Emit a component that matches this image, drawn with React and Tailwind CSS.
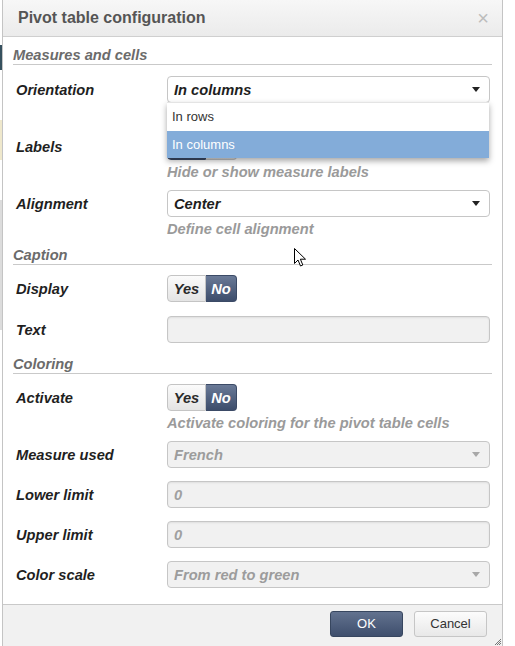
import React from "react";

const font = { fontFamily: '"Liberation Sans", Arial, sans-serif' };

function SectionTitle({ children, className = "" }) {
  return (
    <div className={`border-b border-[#c9c9c9] ${className}`}>
      <div className="h-[17px] leading-[17px] text-[14.67px] font-bold italic text-[#6b6b6b]">
        {children}
      </div>
    </div>
  );
}

function Arrow({ disabled }) {
  return (
    <svg width="8" height="5" viewBox="0 0 8 5" className="shrink-0">
      <path d="M0 0 L8 0 L4 5 Z" fill={disabled ? "#a8a8a8" : "#222"} />
    </svg>
  );
}

function Select({ value, disabled }) {
  return (
    <div
      className={`h-[27px] flex items-center justify-between rounded-[4px] border border-[#c6c6c6] pl-[6px] pr-[9px] ${
        disabled ? "bg-[#f1f1f1]" : "bg-white"
      }`}
    >
      <span
        className={`text-[14.67px] font-bold italic ${disabled ? "text-[#9c9c9c]" : "text-[#1e1e1e]"}`}
      >
        {value}
      </span>
      <Arrow disabled={disabled} />
    </div>
  );
}

function Input({ value }) {
  return (
    <div className="h-[27px] flex items-center rounded-[4px] border border-[#c6c6c6] bg-[#f1f1f1] pl-[6px] shadow-[inset_0_1px_2px_rgba(0,0,0,0.08)]">
      <span className="text-[14.67px] font-bold italic text-[#a0a0a0]">{value}</span>
    </div>
  );
}

function Toggle({ yes }) {
  const on = "bg-gradient-to-b from-[#6a7a97] to-[#3d4d6b] text-white border-[#3b4a66]";
  const off = "bg-gradient-to-b from-[#fbfbfb] to-[#e4e4e4] text-[#2a2a2a] border-[#c4c4c4]";
  return (
    <div className="flex h-[27px] w-[70px] text-[14.67px] font-bold italic">
      <div
        className={`w-[39px] flex items-center justify-center rounded-l-[4px] border ${yes ? on : off}`}
      >
        Yes
      </div>
      <div
        className={`w-[31px] flex items-center justify-center rounded-r-[4px] border border-l-0 ${yes ? off : on}`}
      >
        No
      </div>
    </div>
  );
}

function Row({ label, children, help, className = "" }) {
  return (
    <div className={`flex items-start ${className}`}>
      <div className="w-[154px] pl-[3px] h-[27px] flex items-center text-[14.67px] font-bold italic text-[#1f1f1f]">
        {label}
      </div>
      <div className="flex-1 pr-[2px] relative">
        {children}
        {help !== undefined && (
          <div className="mt-[4px] h-[17px] leading-[17px] text-[14.67px] font-bold italic text-[#9a9a9a]">
            {help}
          </div>
        )}
      </div>
    </div>
  );
}

export default function App() {
  return (
    <div className="relative w-[515px] h-[646px] bg-white flex overflow-hidden" style={font}>
      {/* what peeks out behind the dialog */}
      <div className="w-[2px] flex flex-col">
        <div className="h-[45px]" />
        <div className="h-[25px] bg-[#35505e]" />
        <div className="h-[50px]" />
        <div className="h-[40px] bg-[#efe8cc]" />
        <div className="h-[40px]" />
        <div className="h-[130px] bg-[#dcdcdc]" />
      </div>

      <div className="w-[501px] h-[646px] flex flex-col border-x border-[#c4c4c4] bg-white">
        {/* header */}
        <div className="h-[37px] shrink-0 flex items-center justify-between pl-[15px] pr-[13px] border-b border-[#cfcfcf] bg-gradient-to-b from-[#f7f7f7] to-[#ebebeb]">
          <span className="text-[16px] font-bold text-[#555]">Pivot table configuration</span>
          <span className="text-[20px] leading-none text-[#bcbcbc]">×</span>
        </div>

        {/* body */}
        <div className="flex-1 px-[10px] pt-[10px]">
          <SectionTitle className="mb-[11px]">Measures and cells</SectionTitle>

          <Row label="Orientation" help="" className="mb-[9px] relative z-10">
            <Select value="In columns" />
            <div className="absolute left-0 right-[3px] top-[26px] bg-white border-t border-[#e4e4e4] shadow-[0_3px_6px_rgba(0,0,0,0.35)]">
              <div className="h-[28px] flex items-center pl-[5px] text-[13px] text-[#333]">In rows</div>
              <div className="h-[27px] flex items-center pl-[5px] text-[13px] text-white bg-[#83acd9]">
                In columns
              </div>
            </div>
          </Row>

          <Row label="Labels" help="Hide or show measure labels" className="mb-[9px]">
            <Toggle yes />
          </Row>

          <Row label="Alignment" help="Define cell alignment" className="mb-[9px]">
            <Select value="Center" />
          </Row>

          <SectionTitle className="mb-[10px]">Caption</SectionTitle>

          <Row label="Display" className="mb-[14px]">
            <Toggle yes={false} />
          </Row>

          <Row label="Text" className="mb-[13px]">
            <Input value="" />
          </Row>

          <SectionTitle className="mb-[10px]">Coloring</SectionTitle>

          <Row
            label="Activate"
            help="Activate coloring for the pivot table cells"
            className="mb-[9px]"
          >
            <Toggle yes={false} />
          </Row>

          <Row label="Measure used" className="mb-[13px]">
            <Select value="French" disabled />
          </Row>
          <Row label="Lower limit" className="mb-[13px]">
            <Input value="0" />
          </Row>
          <Row label="Upper limit" className="mb-[13px]">
            <Input value="0" />
          </Row>
          <Row label="Color scale">
            <Select value="From red to green" disabled />
          </Row>
        </div>

        {/* footer */}
        <div className="h-[42px] shrink-0 border-t border-[#c9c9c9] bg-[#f1f1f1] flex justify-end items-start pt-[6px] pr-[15px] gap-[11px] relative">
          <button className="w-[73px] h-[26px] rounded-[3px] border border-[#37465f] bg-gradient-to-b from-[#62728f] to-[#3f4f6d] text-white text-[13px]">
            OK
          </button>
          <button className="w-[73px] h-[26px] rounded-[3px] border border-[#c6c6c6] bg-gradient-to-b from-[#fcfcfc] to-[#e8e8e8] text-[#333] text-[13px]">
            Cancel
          </button>
          <svg
            width="7"
            height="7"
            viewBox="0 0 7 7"
            className="absolute right-[1px] bottom-[1px]"
          >
            <path d="M1 7 L7 1 M3 7 L7 3 M5 7 L7 5" stroke="#777" strokeWidth="1" />
          </svg>
        </div>
      </div>

      {/* mouse pointer */}
      <svg
        width="13"
        height="20"
        viewBox="0 0 13 20"
        className="absolute left-[294px] top-[248px]"
      >
        <path
          d="M0.5 0.5 L0.5 15.5 L4 12 L6.5 18 L8.8 17 L6.4 11.2 L11.5 11.2 Z"
          fill="white"
          stroke="black"
          strokeWidth="1"
          strokeLinejoin="round"
        />
      </svg>
    </div>
  );
}
